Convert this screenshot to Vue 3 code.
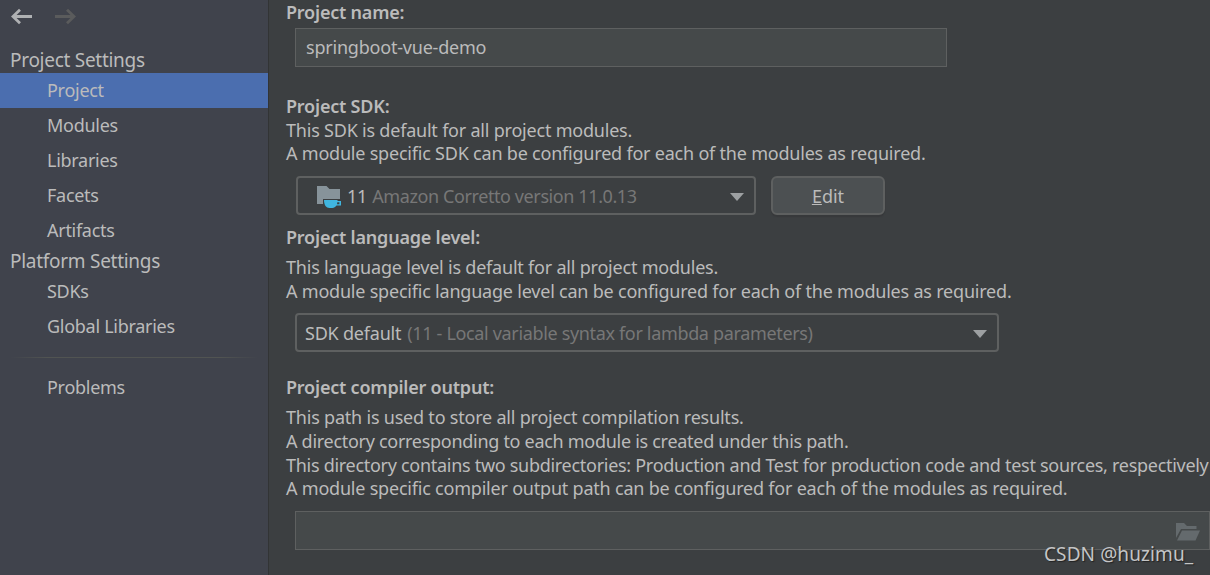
<script setup>
import { ref } from 'vue';

const groups = [
  {
    title: 'Project Settings',
    items: ['Project', 'Modules', 'Libraries', 'Facets', 'Artifacts'],
  },
  {
    title: 'Platform Settings',
    items: ['SDKs', 'Global Libraries'],
  },
];
const selected = ref('Project');
const projectName = ref('springboot-vue-demo');
</script>

<template>
  <div class="dialog">
    <aside class="sidebar">
      <div class="toolbar">
        <svg class="arrow" width="22" height="17" viewBox="0 0 22 17">
          <path d="M21 8.500H2M9 1.700L2 8.500l7 6.800" />
        </svg>
        <svg class="arrow disabled" width="22" height="17" viewBox="0 0 22 17">
          <path d="M1 8.500h19M13 1.700L20 8.500l-7 6.800" />
        </svg>
      </div>
      <div class="group" v-for="group in groups" :key="group.title">
        <div class="group-title">{{ group.title }}</div>
        <div
          class="item"
          v-for="item in group.items"
          :key="item"
          :class="{ active: item === selected }"
          @click="selected = item"
        >
          {{ item }}
        </div>
      </div>
      <div class="separator"></div>
      <div class="item" @click="selected = 'Problems'">Problems</div>
    </aside>

    <main class="content">
      <section>
        <h3>Project name:</h3>
        <div class="field name-field">{{ projectName }}</div>
      </section>

      <section class="sdk-section">
        <h3>Project SDK:</h3>
        <p class="short">This SDK is default for all project modules.</p>
        <p>A module specific SDK can be configured for each of the modules as required.</p>
        <div class="row">
          <div class="combo sdk-combo">
            <svg class="folder" width="25" height="23" viewBox="0 0 25 23">
              <path fill="#87939a" d="M0 0h9.500l3 3H23v10H6v5H0z" />
              <path
                fill="#40b6e0"
                fill-rule="evenodd"
                d="M7 14h13.500v1H24v4.500h-4.500c-1.200 1.600-2.400 2.500-4 2.500h-3C9.200 22 7 19 7 14zM20.300 16.300l-.3 1.900h2.400v-1.900z"
              />
            </svg>
            <span class="version">11</span>
            <span class="hint sdk-hint">Amazon Corretto version 11.0.13</span>
            <svg class="caret" width="14" height="8" viewBox="0 0 14 8"><path d="M0 0h14L7 8z" /></svg>
          </div>
          <button class="edit"><u>E</u>dit</button>
        </div>
      </section>

      <section class="level-section">
        <h3>Project language level:</h3>
        <p>This language level is default for all project modules.</p>
        <p>A module specific language level can be configured for each of the modules as required.</p>
        <div class="combo level-combo">
          <span class="value">SDK default</span>
          <span class="hint">(11 - Local variable syntax for lambda parameters)</span>
          <svg class="caret" width="14" height="8" viewBox="0 0 14 8"><path d="M0 0h14L7 8z" /></svg>
        </div>
      </section>

      <section class="output-section">
        <h3>Project compiler output:</h3>
        <p>This path is used to store all project compilation results.</p>
        <p class="tight">A directory corresponding to each module is created under this path.</p>
        <p class="tight short">This directory contains two subdirectories: Production and Test for production code and test sources, respectively</p>
        <p>A module specific compiler output path can be configured for each of the modules as required.</p>
        <div class="field output-field">
          <svg class="open-folder" width="24" height="18" viewBox="0 0 24 18">
            <path d="M0 0h8l3 3h9.500v3H5L0 15z" />
            <path d="M6 7.500h18L19.500 17.500H1z" />
          </svg>
        </div>
      </section>
    </main>
    <div class="watermark">CSDN @huzimu_</div>
  </div>
</template>

<style>
body {
  margin: 0;
  background: #3c3f41;
}
</style>

<style scoped>
.dialog {
  position: relative;
  display: flex;
  width: 1210px;
  height: 575px;
  overflow: hidden;
  background: #3c3f41;
  color: #bbbbbb;
  font: 18px/24px 'Noto Sans', 'Open Sans', sans-serif;
  letter-spacing: -0.21px;
  white-space: nowrap;
}
.sidebar {
  box-sizing: border-box;
  width: 269px;
  flex-shrink: 0;
  background: #40434c;
  border-right: 1px solid #323435;
  letter-spacing: -0.28px;
}
.toolbar {
  display: flex;
  gap: 21px;
  height: 40px;
  padding: 8px 0 0 11px;
  box-sizing: border-box;
  margin-bottom: 8px;
}
.arrow {
  fill: none;
  stroke: #afb1b3;
  stroke-width: 2.8;
}
.arrow.disabled {
  stroke: #5a5b5c;
}
.group-title {
  height: 25px;
  padding-left: 10px;
  font-size: 19px;
}
.group + .group {
  margin-top: 1px;
}
.item {
  height: 35px;
  line-height: 35px;
  padding-left: 47px;
}
.item.active {
  background: #4b6eaf;
}
.separator {
  height: 1px;
  margin: 13px 10px 12px;
  background: linear-gradient(90deg, transparent, #515452 15%, #515452 85%, transparent);
}
.content {
  flex: 1;
  min-width: 0;
  padding-left: 17px;
}
h3,
p {
  margin: 0;
  font-size: 18px;
  height: 24px;
}
h3 {
  font-weight: 600;
}
.short {
  height: 23px;
}
.tight {
  letter-spacing: -0.29px;
}
.field,
.combo {
  box-sizing: border-box;
  display: flex;
  align-items: center;
  height: 39px;
  border: 2px solid #5e6060;
}
.field {
  background: #45494a;
  border-width: 1px;
}
.combo {
  border-radius: 4px;
}
.name-field {
  width: 652px;
  margin: 4px 0 0 9px;
  padding: 0 0 2px 10px;
}
.sdk-section {
  margin-top: 27px;
}
.row {
  display: flex;
  gap: 15px;
  margin: 11px 0 0 10px;
}
.sdk-combo {
  width: 460px;
  padding: 0 10px 0 19px;
}
.folder {
  margin-top: 4px;
}
.version {
  margin: 0 5px;
}
.hint {
  color: #777777;
  letter-spacing: -0.34px;
}
.sdk-hint {
  letter-spacing: -0.4px;
}
.caret {
  margin: 2px 0 0 auto;
  fill: #9da0a2;
}
.edit {
  box-sizing: border-box;
  width: 114px;
  height: 39px;
  padding: 0;
  color: #bbbbbb;
  font: inherit;
  background: #4c5052;
  border: 2px solid #5e6060;
  border-radius: 6px;
  box-shadow: 0 2px 1px #37393b;
}
.level-section {
  margin-top: 10px;
}
.level-section h3,
.output-section h3 {
  margin-bottom: 6px;
}
.level-combo {
  width: 704px;
  margin: 10px 0 0 9px;
  padding: 0 10px 0 8px;
}
.value {
  margin-right: 6px;
}
.output-section {
  margin-top: 23px;
}
.output-field {
  width: 915px;
  margin: 11px 0 0 9px;
}
.open-folder {
  margin: 3px 9px 0 auto;
  fill: #646a6d;
}
.watermark {
  position: absolute;
  left: 1044px;
  top: 542px;
  font-size: 19px;
  letter-spacing: 0.1px;
  color: #c4c5c6;
  text-shadow: 1px 1px 1px #222;
}
</style>
